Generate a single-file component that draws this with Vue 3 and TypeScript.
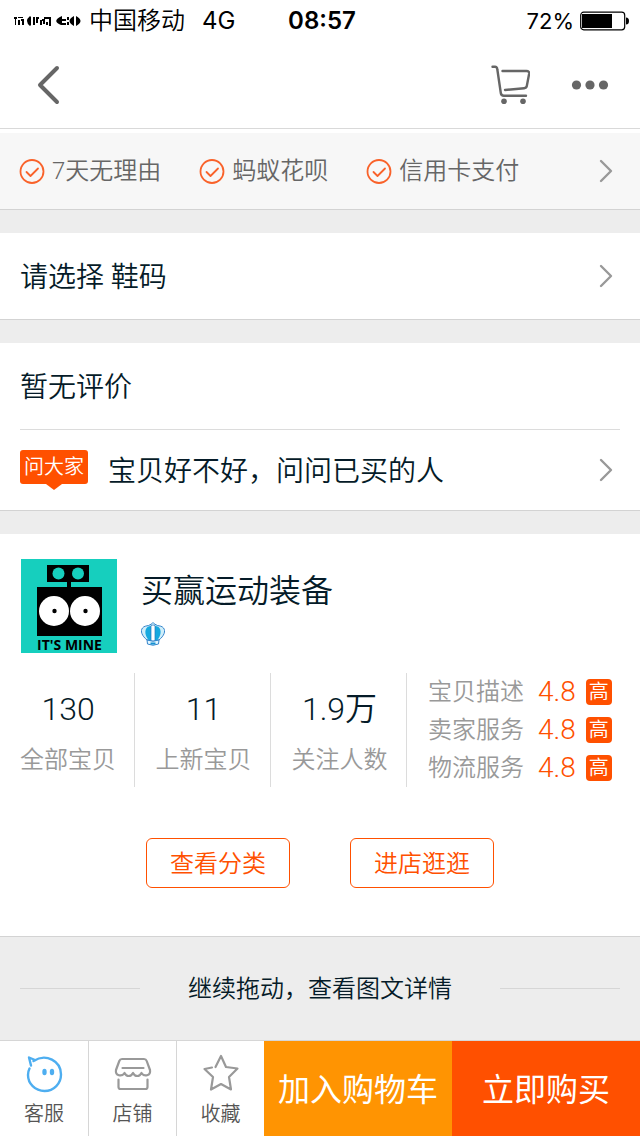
<script setup lang="ts">
interface Stat {
  value: string
  label: string
}

const services: string[] = ['7天无理由', '蚂蚁花呗', '信用卡支付']

const stats: Stat[] = [
  { value: '130', label: '全部宝贝' },
  { value: '11', label: '上新宝贝' },
  { value: '1.9万', label: '关注人数' },
]

const ratings: Stat[] = [
  { value: '4.8', label: '宝贝描述' },
  { value: '4.8', label: '卖家服务' },
  { value: '4.8', label: '物流服务' },
]
</script>

<template>
  <div class="page">
    <header>
      <div class="status">
        <div class="status-side">
          <svg class="signal" width="68" height="14" viewBox="0 0 68 14" aria-hidden="true">
            <path d="M0 3h3v2H2v6H1V5H0zM4 3h5v1H4zM4 6h2v5H4zM7 5h3v6H8V7H7zM16 2q-6 5 0 10l1-1V3zM19 3h2v8h-2zM22 3h3v2h-1v4h-2zM26 6h2v5h-2zM28 5h3v5h-2V7h-1zM30 3h7v9h-2V5h-5zM32 8h2v3h-2zM48 2v3h4v2h-4v2h4v2h-5q-10-4 1-9zM53 3h2v3h-2zM53 8h2v3h-2zM60 2v10q-9-5 0-10zM62 2q9 5 0 10z" />
          </svg>
          <span class="carrier">中国移动</span>
          <span>4G</span>
        </div>
        <time>08:57</time>
        <div class="status-side status-end">
          <span class="charge">72%</span>
          <svg width="50" height="20" viewBox="0 0 50 20" aria-hidden="true">
            <rect x=".7" y="1.200" width="44" height="17.600" rx="3" fill="none" stroke="#000" stroke-width="1.200" />
            <path d="M2 3h30v14H2z" />
            <path d="M46 6.500q3 0 3 3.500t-3 3.500z" />
          </svg>
        </div>
      </div>
      <nav class="nav">
        <button class="icon-button" type="button" aria-label="返回">
          <svg width="24" height="40" viewBox="0 0 24 40">
            <path d="M20 3 3 20l17 17" fill="none" stroke="#666" stroke-width="4" stroke-linecap="round" stroke-linejoin="round" />
          </svg>
        </button>
        <div class="nav-actions">
          <button class="icon-button" type="button" aria-label="购物车">
            <svg width="40" height="40" viewBox="0 0 40 40">
              <g fill="none" stroke="#666" stroke-width="2.400" stroke-linecap="round" stroke-linejoin="round">
                <path d="M2.500 1.800H5q2 0 2.300 2.500L10.800 28q.4 2.800 3 2.800H36" />
                <path d="M12.500 6h24q3 0 2.600 3L36.800 21q-.4 2-2.600 2.200L15 25" />
              </g>
              <circle cx="14" cy="36.300" r="2.800" fill="#666" />
              <circle cx="33" cy="36.300" r="2.800" fill="#666" />
            </svg>
          </button>
          <button class="icon-button" type="button" aria-label="更多">
            <svg width="38" height="12" viewBox="0 0 38 12" fill="#666">
              <circle cx="5.500" cy="6" r="4.600" />
              <circle cx="19" cy="6" r="4.600" />
              <circle cx="32.500" cy="6" r="4.600" />
            </svg>
          </button>
        </div>
      </nav>
    </header>

    <main>
      <a class="services" href="#services">
        <span v-for="item in services" :key="item" class="service">
          <svg width="26" height="26" viewBox="0 0 26 26" fill="none" stroke="#f9622a" stroke-width="1.800" aria-hidden="true">
            <circle cx="13" cy="13.500" r="11.500" />
            <path d="m7.500 14 4 4 7.500-7.500" stroke-linecap="round" stroke-linejoin="round" />
          </svg>
          {{ item }}
        </span>
        <svg class="chevron" width="16" height="24" viewBox="0 0 16 24" aria-hidden="true">
          <path d="m3 2 10 10L3 22" />
        </svg>
      </a>

      <a class="row card" href="#size">
        <span class="row-text">请选择 鞋码</span>
        <svg class="chevron" width="16" height="24" viewBox="0 0 16 24" aria-hidden="true">
          <path d="m3 2 10 10L3 22" />
        </svg>
      </a>

      <section class="card">
        <div class="row"><span class="row-text">暂无评价</span></div>
        <a class="row ask" href="#ask">
          <span class="ask-tag">问大家</span>
          <span class="row-text">宝贝好不好，问问已买的人</span>
          <svg class="chevron" width="16" height="24" viewBox="0 0 16 24" aria-hidden="true">
            <path d="m3 2 10 10L3 22" />
          </svg>
        </a>
      </section>

      <section class="card shop">
        <div class="shop-head">
          <svg width="96" height="95" viewBox="0 0 96 95" role="img" aria-label="IT'S MINE">
            <path fill="#16cfbe" d="M0 0h96v94H0z" />
            <path d="M26 6h42v17H50v5h31v49H16V28h30v-5H26z" />
            <g fill="#16cfbe">
              <circle cx="37.500" cy="14.500" r="6" />
              <circle cx="57" cy="14.500" r="6" />
            </g>
            <g fill="#fff">
              <circle cx="33" cy="52" r="15" />
              <circle cx="64" cy="52" r="15" />
            </g>
            <circle cx="33.500" cy="52" r="2.200" />
            <circle cx="64.500" cy="52" r="2.200" />
            <text class="logo-text" x="48.500" y="91" text-anchor="middle">IT'S MINE</text>
          </svg>
          <div class="shop-title">
            <h1>买赢运动装备</h1>
            <svg width="24" height="26" viewBox="0 0 24 26" aria-hidden="true">
              <path d="M6 19C1 15-1 10 1.500 7 3 5 5.500 5 7.500 4.500 9.500 3.500 11 3 12 1.500c1 1.500 2.500 2 4.500 3 2 .5 4.500.5 6 2.500C25 10 23 15 18 19z" fill="#cfeefa" stroke="#3585cc" />
              <path d="M8 19.500C4 15 3 9 6.500 6q1.500-1 3.500-1v15zM16 19.500c4-4.500 5-10.500 1.500-13.500Q16 5 14 5v15z" fill="#16a9df" />
              <path d="M10 4.500q2-1 4 0V20h-4z" fill="#fff" stroke="#2275bc" stroke-width=".7" />
              <path d="M6 19q6 2.500 12 0l-.5 4q-5.500 2.500-11 0z" fill="#e4f7ff" stroke="#3585cc" />
              <path d="M9.500 21.500h5v2h-5z" fill="#1590d0" />
            </svg>
          </div>
        </div>

        <div class="figures">
          <div v-for="stat in stats" :key="stat.label" class="stat">
            <span class="stat-value">{{ stat.value }}</span>
            <span class="stat-label">{{ stat.label }}</span>
          </div>
          <div class="ratings">
            <div v-for="rating in ratings" :key="rating.label" class="rating">
              <span>{{ rating.label }}</span>
              <span class="score">{{ rating.value }}</span>
              <span class="level">高</span>
            </div>
          </div>
        </div>

        <div class="shop-actions">
          <button type="button">查看分类</button>
          <button type="button">进店逛逛</button>
        </div>
      </section>

      <div class="more">继续拖动，查看图文详情</div>
    </main>

    <footer class="bar">
      <button class="tab" type="button">
        <svg width="40" height="40" viewBox="0 0 40 40" fill="none" stroke="#4eaef0" stroke-width="2.400" stroke-linecap="round" stroke-linejoin="round" aria-hidden="true">
          <path d="M9.500 7C22-1 37 7 37 20.500c0 9-7 16.500-16.500 16.500S4 29.500 4 21c0-2.500.5-4.500 1.500-6.500" />
          <path d="M7 11.500 5 3.500l6 2.500" />
          <ellipse cx="20.500" cy="18" rx="1" ry="2" fill="#4eaef0" />
          <ellipse cx="28" cy="18" rx="1" ry="2" fill="#4eaef0" />
        </svg>
        客服
      </button>
      <button class="tab" type="button">
        <svg width="40" height="40" viewBox="0 0 40 40" fill="none" stroke="#999" stroke-width="2.200" stroke-linecap="round" stroke-linejoin="round" aria-hidden="true">
          <path d="M9 5h22q2 0 2.700 2L37 16c1 6-6 7-8.500 3-2 4-6.500 4-8.500 0-2 4-6.500 4-8.500 0C9 23 2 22 3 16L6.300 7Q7 5 9 5z" />
          <path d="M9.500 14h21M5.500 25.500V33q0 2 2 2h25q2 0 2-2v-7.500" />
        </svg>
        店铺
      </button>
      <button class="tab" type="button">
        <svg width="40" height="40" viewBox="0 0 40 40" fill="none" stroke="#999" stroke-width="2.200" stroke-linecap="round" stroke-linejoin="round" aria-hidden="true">
          <path d="m14.500 13 5.500-11 5 11 11.500 1.500L28 23l2 12.500L20 30l-10 5.500L12 23l-8.500-8 7.500-1.500" />
        </svg>
        收藏
      </button>
      <button class="buy cart" type="button">加入购物车</button>
      <button class="buy now" type="button">立即购买</button>
    </footer>
  </div>
</template>

<style>
body {
  margin: 0;
  background: #ededed;
}
</style>

<style scoped>
.page {
  display: flex;
  flex-direction: column;
  min-height: 100vh;
  color: #051b28;
  background: #ededed;
  font: 350 24px/32px Roboto, "Noto Sans CJK SC", sans-serif;
}

button {
  margin: 0;
  padding: 0;
  border: 0;
  background: none;
  color: inherit;
  font: inherit;
}

a {
  color: inherit;
  text-decoration: none;
}

svg {
  display: block;
  flex: none;
}

header {
  border-bottom: 1px solid #d9d9d9;
  background: #fff;
}

.status {
  display: flex;
  align-items: center;
  height: 42px;
  color: #000;
  font-family: Inter, "Noto Sans CJK SC", sans-serif;
  font-weight: 400;
}

.status-side {
  display: flex;
  flex: 1;
  align-items: center;
  padding-left: 14px;
}

.carrier {
  margin: 0 17px 0 7px;
  font-weight: 350;
}

.status time {
  font-weight: 600;
}

.status-end {
  justify-content: flex-end;
  gap: 6px;
  padding: 0 10px 0 0;
}

.charge {
  font-size: 22px;
}

.nav {
  display: flex;
  align-items: center;
  justify-content: space-between;
  height: 86px;
  padding: 0 31px 0 37px;
}

.nav-actions {
  display: flex;
  align-items: center;
  gap: 41px;
}

.services {
  display: flex;
  align-items: center;
  gap: 38px;
  height: 76px;
  padding: 0 26px 0 19px;
  border-top: 4px solid #fff;
  border-bottom: 1px solid #d3d3d3;
  background: #f7f7f7;
  color: #666;
}

.service {
  display: flex;
  align-items: center;
  gap: 7px;
}

.chevron {
  margin-left: auto;
  fill: none;
  stroke: #999;
  stroke-width: 2.4px;
  stroke-linecap: round;
  stroke-linejoin: round;
}

.card {
  margin-top: 23px;
  border-bottom: 1px solid #d3d3d3;
  background: #fff;
}

.row {
  display: flex;
  align-items: center;
  height: 86px;
  padding: 0 26px 0 20px;
  font-size: 28px;
}

.row-text {
  padding-top: 4px;
}

.ask {
  height: 80px;
  margin: 0 20px;
  padding: 0 6px 0 0;
  border-top: 1px solid #dcdcdc;
}

.ask-tag {
  position: relative;
  margin: 0 20px 6px 0;
  padding: 0 4px;
  border-radius: 3px;
  background: #ff5000;
  color: #fff;
  font-size: 20px;
  line-height: 34px;
}

.ask-tag::after {
  position: absolute;
  top: 100%;
  left: 50%;
  margin-left: -8px;
  border: 8px solid transparent;
  border-top: 6px solid #ff5000;
  border-bottom: 0;
  content: "";
}

.shop {
  padding: 25px 0 48px;
}

.shop-head {
  display: flex;
  gap: 24px;
  padding: 0 21px;
}

.logo-text {
  font: 700 14px "Open Sans", sans-serif;
}

.shop-title {
  padding-top: 12px;
}

h1 {
  margin: 0 0 10px;
  font-size: 32px;
  font-weight: 350;
  line-height: 40px;
}

.figures {
  display: grid;
  grid-template-columns: 135fr 136fr 136fr 233fr;
  margin-top: 19px;
}

.stat {
  display: flex;
  flex-direction: column;
  align-items: center;
  gap: 17px;
  padding: 18px 0 11px 2px;
  border-right: 1px solid #dcdcdc;
}

.stat-value {
  font-size: 32px;
  line-height: 36px;
}

.stat-label,
.rating {
  color: #999;
}

.rating {
  display: flex;
  align-items: center;
  height: 38px;
  padding-left: 21px;
}

.score {
  margin: 0 10px 0 14px;
  color: #ff5000;
  font-size: 28px;
}

.level {
  width: 26px;
  border-radius: 4px;
  background: #ff5000;
  color: #fff;
  font-size: 20px;
  line-height: 26px;
  text-align: center;
}

.shop-actions {
  display: flex;
  justify-content: center;
  gap: 60px;
  margin-top: 51px;
}

.shop-actions button {
  padding: 9px 23px 7px;
  border: 1px solid #ff5000;
  border-radius: 6px;
  color: #ff5000;
}

.more {
  display: flex;
  align-items: center;
  justify-content: space-between;
  height: 103px;
  padding: 0 20px;
}

.more::before,
.more::after {
  width: 120px;
  height: 1px;
  background: #d6d6d6;
  content: "";
}

.bar {
  display: grid;
  grid-template-columns: 88fr 88fr 88fr 188fr 188fr;
  margin-top: auto;
  height: 95px;
  border-top: 1px solid #d6d6d6;
  background: #fff;
}

.tab {
  display: flex;
  flex-direction: column;
  align-items: center;
  gap: 4px;
  padding-top: 13px;
  color: #555;
  font-size: 20px;
}

.tab + .tab {
  border-left: 1px solid #d6d6d6;
}

.buy {
  padding-top: 2px;
  color: #fff;
  font-size: 32px;
  font-weight: 400;
}

.cart {
  background: #ff9402;
}

.now {
  background: #ff5000;
}
</style>
